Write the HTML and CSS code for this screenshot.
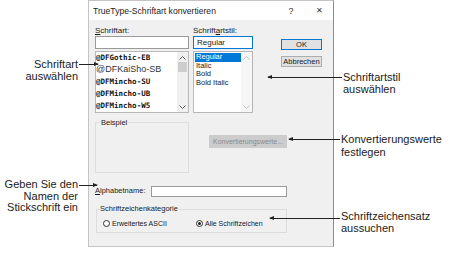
FILE: index.html
```html
<!DOCTYPE html>
<html lang="de">
  <head>
    <meta charset="utf-8">
    <title>TrueType-Schriftart konvertieren</title>
    <link rel="stylesheet" href="styles.css">
  </head>
  <body>

  <div class="figure">

    <div class="dialog">
      <div class="titlebar">
        <span class="title">TrueType-Schriftart konvertieren</span>
        <span class="tb-btn">?</span>
        <span class="tb-btn close">&#x2715;</span>
      </div>

      <div class="dlg-body">

        <div class="top-row">
          <div class="font-col">
            <div class="lbl"><u>S</u>chriftart:</div>
            <div class="input"></div>
            <div class="listbox">
              <ul class="items font-items">
                <li class="mono">@DFGothic-EB</li>
                <li class="sans">@DFKaiSho-SB</li>
                <li class="mono">@DFMincho-SU</li>
                <li class="mono">@DFMincho-UB</li>
                <li class="mono">@DFMincho-W5</li>
              </ul>
              <div class="scrollbar">
                <svg class="chev" width="7" height="4" viewBox="0 0 7 4"><polyline points="0.5,3.5 3.5,0.5 6.5,3.5"/></svg>
                <div class="thumb"></div>
                <svg class="chev down" width="7" height="4" viewBox="0 0 7 4"><polyline points="0.5,0.5 3.5,3.5 6.5,0.5"/></svg>
              </div>
            </div>
          </div>

          <div class="style-col">
            <div class="lbl">Schrift<u>a</u>rtstil:</div>
            <div class="input focused">Regular</div>
            <div class="listbox">
              <ul class="items style-items">
                <li class="selected">Regular</li>
                <li>Italic</li>
                <li>Bold</li>
                <li>Bold Italic</li>
              </ul>
              <div class="scrollbar disabled">
                <svg class="chev" width="7" height="4" viewBox="0 0 7 4"><polyline points="0.5,3.5 3.5,0.5 6.5,3.5"/></svg>
                <svg class="chev down" width="7" height="4" viewBox="0 0 7 4"><polyline points="0.5,0.5 3.5,3.5 6.5,0.5"/></svg>
              </div>
            </div>
          </div>

          <div class="btn-col">
            <div class="btn default">OK</div>
            <div class="btn">Abbrechen</div>
          </div>
        </div>

        <div class="mid-row">
          <div class="group sample">
            <span class="legend">Beispiel</span>
          </div>
          <div class="btn conv">Konvertierungswerte...</div>
        </div>

        <div class="name-row">
          <div class="name-lbl"><u>A</u>lphabetname:</div>
          <div class="input name-input"></div>
        </div>

        <div class="group category">
          <span class="legend">Schriftzeichenkategorie</span>
          <div class="radios">
            <span class="radio first"><span class="dot"></span>Erweitertes ASCII</span>
            <span class="radio"><span class="dot on"></span>Alle Schriftzeichen</span>
          </div>
        </div>

      </div>
    </div>

    <!-- callouts -->
    <div class="note left n-font">Schriftart<br>auswählen</div>
    <div class="arrow head-right a-font"></div>

    <div class="note n-style">Schriftartstil<br>auswählen</div>
    <div class="arrow head-left a-style"></div>

    <div class="note n-conv">Konvertierungswerte<br>festlegen</div>
    <div class="arrow head-left a-conv"></div>

    <div class="note left n-name">Geben Sie den<br>Namen der<br>Stickschrift ein</div>
    <div class="arrow head-right a-name"></div>

    <div class="note n-cat">Schriftzeichensatz<br>aussuchen</div>
    <div class="arrow head-left a-cat"></div>

  </div>

  </body>
</html>
```

FILE: styles.css
```css
body {
  margin: 0;
  background: #ffffff;
  font-family: "Liberation Sans", Arial, sans-serif;
}

.figure {
  position: relative;
  width: 450px;
  height: 262px;
}

/* dialog */

.dialog {
  margin-left: 88px;
  width: 244px;
  height: 245px;
  border: 1px solid #c4c4c4;
  border-right-color: #8c8c8c;
  background: #f0f0f0;
  font-size: 8px;
  color: #1a1a1a;
  display: flex;
  flex-direction: column;
}

.titlebar {
  height: 19px;
  background: #ffffff;
  display: flex;
  align-items: center;
  padding-left: 4px;
}
.title {
  flex: 1;
  font-size: 8.6px;
  color: #222;
}
.tb-btn {
  width: 28px;
  text-align: center;
  font-size: 9px;
  color: #333;
}
.tb-btn.close {
  font-size: 8px;
}

.dlg-body {
  padding: 6px 11px 0 6px;
}

.top-row {
  display: flex;
}
.font-col {
  width: 94px;
}
.style-col {
  width: 60px;
  margin-left: 4px;
}
.btn-col {
  width: 41px;
  margin-left: 28px;
  padding-top: 13px;
  display: flex;
  flex-direction: column;
  gap: 6px;
}

.lbl {
  height: 10px;
  line-height: 10px;
}

.input {
  box-sizing: border-box;
  height: 13px;
  border: 1px solid #9a9a9a;
  background: #ffffff;
  line-height: 11px;
  padding-left: 3px;
  margin-bottom: 2px;
}
.input.focused {
  border-color: #0078d7;
}

.listbox {
  box-sizing: border-box;
  height: 62px;
  border: 1px solid #b8b8b8;
  background: #ffffff;
  display: flex;
}

.items {
  list-style: none;
  margin: 0;
  padding: 0;
  flex: 1;
}
.font-items li {
  height: 12px;
  line-height: 11px;
  white-space: nowrap;
}
.font-items .mono {
  font-family: "DejaVu Sans Mono", "Liberation Mono", monospace;
  font-weight: bold;
  font-size: 7.5px;
  color: #111;
}
.font-items .sans {
  font-size: 9px;
  color: #333;
}
.style-items {
  padding: 1px 0 0 1px;
  font-size: 7.5px;
}
.style-items li {
  height: 8.5px;
  line-height: 8.5px;
  padding-left: 1px;
}
.style-items .selected {
  background: #0078d7;
  color: #ffffff;
}

.scrollbar {
  width: 11px;
  background: #f0f0f0;
  display: flex;
  flex-direction: column;
  align-items: center;
  padding: 4px 0 3px;
  box-sizing: border-box;
}
.scrollbar.disabled {
  background: #f6f6f6;
}
.chev {
  fill: none;
  stroke: #606060;
  stroke-width: 1;
}
.scrollbar.disabled .chev {
  stroke: #c2c2c2;
}
.chev.down {
  margin-top: auto;
}
.thumb {
  width: 9px;
  height: 10px;
  margin-top: 2px;
  background: #cdcdcd;
}

.btn {
  box-sizing: border-box;
  height: 11px;
  line-height: 9px;
  border: 1px solid #adadad;
  background: #e1e1e1;
  text-align: center;
  font-size: 7.5px;
}
.btn.default {
  border-color: #0078d7;
}

.mid-row {
  display: flex;
  margin-top: 9px;
}

.group {
  box-sizing: border-box;
  border: 1px solid #dcdcdc;
  display: flex;
  flex-direction: column;
  align-items: flex-start;
}
.legend {
  margin: -4px 0 0 4px;
  padding: 0 1px;
  line-height: 8px;
  font-size: 7.5px;
  background: #f0f0f0;
}
.sample {
  width: 94px;
  height: 51px;
}

.conv {
  width: 78px;
  height: 13px;
  line-height: 11px;
  margin: 13px 0 0 20px;
  background: #cccccc;
  border-color: #cccccc;
  color: #8a8a8a;
  font-size: 7px;
  white-space: nowrap;
}

.name-row {
  display: flex;
  margin-top: 13px;
}
.name-lbl {
  width: 56px;
  line-height: 9px;
  font-size: 7.5px;
}
.name-input {
  width: 136px;
  height: 11px;
  margin: 0;
}

.category {
  width: 191px;
  height: 24px;
  margin: 12px 0 0 1px;
}
.category .legend {
  margin: -5px 0 0 2px;
}
.radios {
  display: flex;
  margin-top: 6px;
  padding-left: 6px;
  line-height: 9px;
  font-size: 7px;
}
.radio {
  display: flex;
  align-items: center;
  gap: 2px;
}
.radio.first {
  width: 93px;
}
.dot {
  box-sizing: border-box;
  width: 7px;
  height: 7px;
  border: 1px solid #333;
  border-radius: 50%;
  background: #ffffff;
  display: flex;
  align-items: center;
  justify-content: center;
}
.dot.on::after {
  content: "";
  width: 3px;
  height: 3px;
  border-radius: 50%;
  background: #222;
}

/* callouts around the dialog */

.note {
  position: absolute;
  font-size: 11px;
  line-height: 12px;
  color: #1a1a1a;
  white-space: nowrap;
}
.note.left {
  text-align: right;
}
.n-font {
  right: 372px;
  top: 58px;
}
.n-style {
  left: 343px;
  top: 71px;
}
.n-conv {
  left: 341px;
  top: 133px;
  line-height: 12.5px;
}
.n-name {
  right: 372px;
  top: 179px;
  line-height: 11.5px;
}
.n-cat {
  left: 341px;
  top: 211px;
  line-height: 11.5px;
}

.arrow {
  position: absolute;
  height: 1px;
  background: #222;
}
.arrow::after {
  content: "";
  position: absolute;
  top: -2px;
  border-top: 2.5px solid transparent;
  border-bottom: 2.5px solid transparent;
}
.arrow.head-right::after {
  right: -1px;
  border-left: 5px solid #222;
}
.arrow.head-left::after {
  left: -1px;
  border-right: 5px solid #222;
}
.a-font {
  left: 79px;
  top: 64px;
  width: 19px;
}
.a-style {
  left: 268px;
  top: 77px;
  width: 74px;
}
.a-conv {
  left: 289px;
  top: 139px;
  width: 51px;
}
.a-name {
  left: 79px;
  top: 185px;
  width: 18px;
}
.a-cat {
  left: 270px;
  top: 218px;
  width: 70px;
}
```
